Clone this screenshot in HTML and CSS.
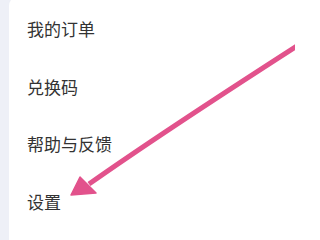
FILE: index.html
```html
<!DOCTYPE html>
<html lang="zh-CN">
<head>
<meta charset="utf-8">
<title>Menu</title>
<link rel="stylesheet" href="styles.css">
</head>
<body>
<div class="card">
  <ul class="menu">
    <li class="item">我的订单</li>
    <li class="item">兑换码</li>
    <li class="item">帮助与反馈</li>
    <li class="item">设置</li>
  </ul>
</div>
<svg class="arrow" width="295" height="224" viewBox="0 0 295 224">
  <path d="M302 40 L300 44 Q160 134 89 184" fill="none" stroke="#e2528c" stroke-width="5"/>
  <polygon points="71,195 80,177 96,193" fill="#e2528c" stroke="#e2528c" stroke-width="1.5" stroke-linejoin="round"/>
</svg>
</body>
</html>
```
FILE: styles.css
```css
html, body {
  margin: 0;
  padding: 0;
  height: 100%;
  overflow: hidden;
  background: #eef0f7;
}
.card {
  margin-left: 9px;
  margin-top: -4px;
  padding-top: 4px;
  height: 100%;
  background: #ffffff;
  border-top-left-radius: 10px;
}
.menu {
  list-style: none;
  margin: 0;
  padding: 0 0 0 18px;
}
.item {
  height: 57.6px;
  display: flex;
  align-items: center;
  font-family: "Noto Sans CJK SC", "Noto Sans", sans-serif;
  font-size: 17px;
  color: #333333;
}
.arrow {
  position: absolute;
  left: 0;
  top: 0;
  overflow: hidden;
}
```
